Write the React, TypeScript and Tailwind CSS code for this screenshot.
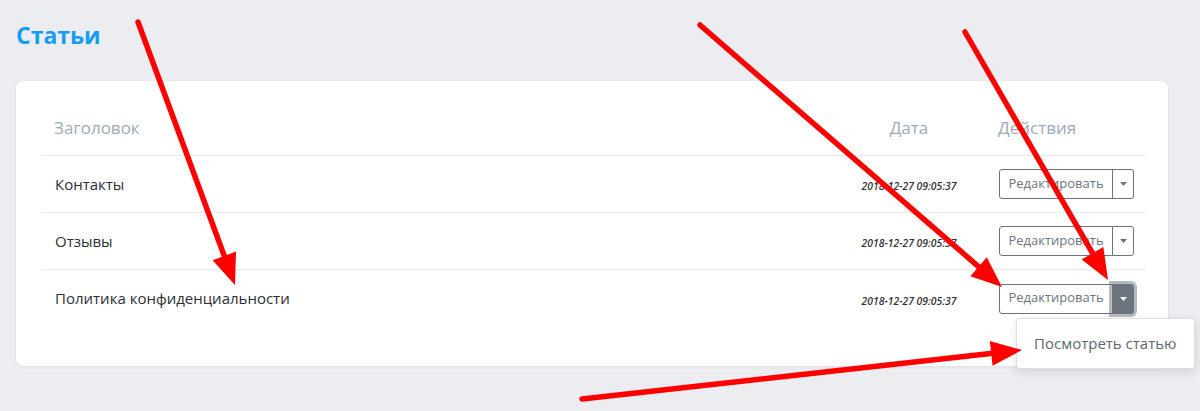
import React from "react";

type Row = { title: string; date: string; open?: boolean };

const rows: Row[] = [
  { title: "Контакты", date: "2018-12-27 09:05:37" },
  { title: "Отзывы", date: "2018-12-27 09:05:37" },
  { title: "Политика конфиденциальности", date: "2018-12-27 09:05:37", open: true },
];

function Caret({ light }: { light?: boolean }) {
  return (
    <svg width="7" height="4" viewBox="0 0 7 4" className="block">
      <path d="M0 0 L7 0 L3.5 4 Z" fill={light ? "#ffffff" : "#6c757d"} />
    </svg>
  );
}

function EditButton({ open }: { open?: boolean }) {
  return (
    <div className="relative flex h-[30px]">
      <button className="h-full w-[114px] rounded-l-[3px] border border-[#6c757d] bg-white text-[13px] text-[#6c757d] flex items-center justify-center pb-[1px]">
        Редактировать
      </button>
      {open ? (
        <button className="h-full w-[22px] -ml-px rounded-r-[3px] border border-[#6c757d] bg-[#6c757d] flex items-center justify-center shadow-[0_0_0_3px_rgba(108,117,125,0.5)]">
          <Caret light />
        </button>
      ) : (
        <button className="h-full w-[22px] -ml-px rounded-r-[3px] border border-[#6c757d] bg-white flex items-center justify-center">
          <Caret />
        </button>
      )}
      {open && (
        <div className="absolute left-[17px] top-[34px] z-10 w-[179px] h-[51px] rounded-[4px] border border-[rgba(0,0,0,0.12)] bg-white shadow-[0_3px_10px_rgba(0,0,0,0.12)] flex items-center pl-[17px] text-[15px] text-[#5c6773] whitespace-nowrap">
          Посмотреть статью
        </div>
      )}
    </div>
  );
}

function Arrow({ x1, y1, x2, y2 }: { x1: number; y1: number; x2: number; y2: number }) {
  const dx = x2 - x1;
  const dy = y2 - y1;
  const len = Math.hypot(dx, dy);
  const ux = dx / len;
  const uy = dy / len;
  const hl = 31;
  const hw = 12.5;
  const bx = x2 - ux * hl;
  const by = y2 - uy * hl;
  const px = -uy * hw;
  const py = ux * hw;
  return (
    <g>
      <line x1={x1} y1={y1} x2={bx + ux * 4} y2={by + uy * 4} stroke="#ff0000" strokeWidth={5.5} strokeLinecap="round" />
      <polygon
        points={`${x2},${y2} ${bx + px},${by + py} ${bx - px},${by - py}`}
        fill="#ff0000"
      />
    </g>
  );
}

export default function App() {
  return (
    <div
      className="relative min-h-[411px] w-[1200px] overflow-hidden bg-[#ebedf0] pt-[19px]"
      style={{ fontFamily: '"Open Sans", "Noto Sans", sans-serif' }}
    >
      <h1 className="pl-[16px] text-[23px] leading-[32px] font-bold text-[#169cf6]">Статьи</h1>

      <div className="ml-[16px] mt-[30px] w-[1152px] rounded-[8px] bg-white pl-[26px] pr-[21px] pt-[20px] pb-[39px] shadow-[0_1px_4px_rgba(0,0,0,0.06)]">
        <div className="grid grid-cols-[1fr_154px_161px] h-[55px] items-center border-b border-[#e9ecef] text-[17px] text-[#9eabb8]">
          <div className="pl-[12px]">Заголовок</div>
          <div className="text-center">Дата</div>
          <div className="pl-[12px]">Действия</div>
        </div>
        {rows.map((r, i) => (
          <div
            key={i}
            className={`grid grid-cols-[1fr_154px_161px] h-[57px] items-center ${
              i < rows.length - 1 ? "border-b border-[#e9ecef]" : ""
            }`}
          >
            <div className="pl-[13px] text-[15px] text-[#2b2f33]">{r.title}</div>
            <div className="text-center text-[10.4px] italic font-semibold text-[#333] pt-[6px]">{r.date}</div>
            <div className="pl-[13px]">
              <EditButton open={r.open} />
            </div>
          </div>
        ))}
      </div>

      <svg className="pointer-events-none absolute left-0 top-0 z-20" width="1200" height="411" viewBox="0 0 1200 411">
        <Arrow x1={138} y1={22} x2={235} y2={285} />
        <Arrow x1={700} y1={25} x2={1002} y2={287} />
        <Arrow x1={965} y1={32} x2={1108} y2={280} />
        <Arrow x1={582} y1={399} x2={1022} y2={350} />
      </svg>
    </div>
  );
}
